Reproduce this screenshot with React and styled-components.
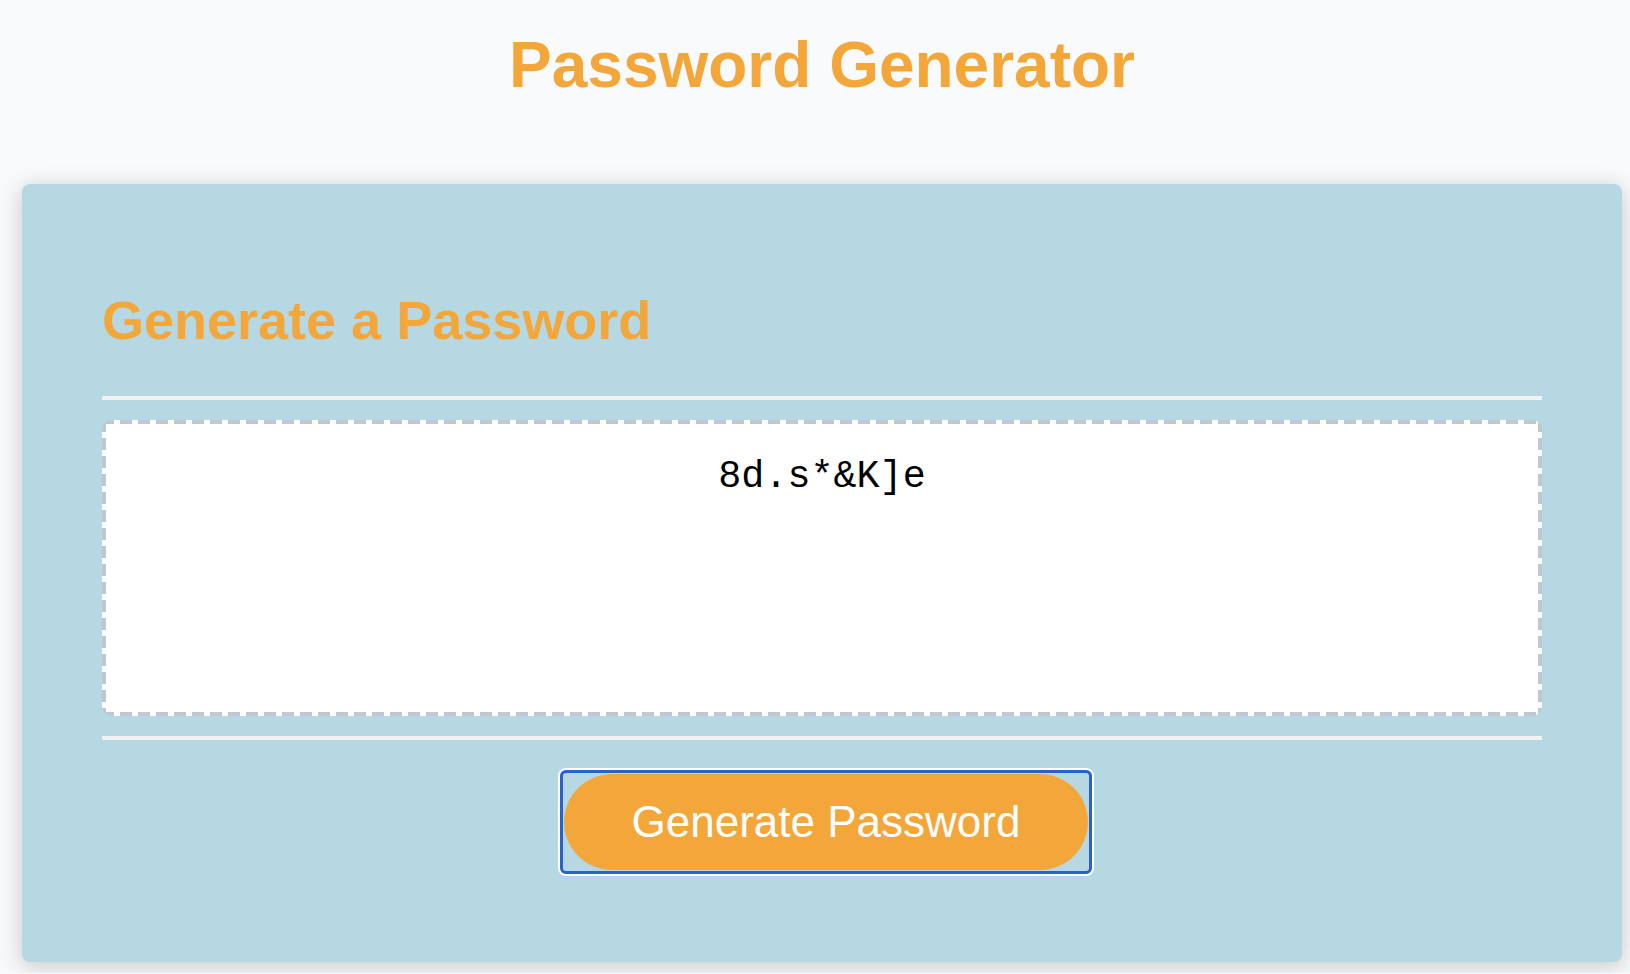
import styled, { createGlobalStyle } from 'styled-components';

const dashColor = '#c0c7cf';
const dashH = `repeating-linear-gradient(90deg, ${dashColor} 0 12px, transparent 12px 18px)`;
const dashV = `repeating-linear-gradient(180deg, ${dashColor} 0 12px, transparent 12px 18px)`;

const GlobalStyle = createGlobalStyle`
  html, body {
    margin: 0;
    padding: 0;
    background-color: #f9fafb;
    font-family: Helvetica, "Liberation Sans", Arial, sans-serif;
  }
`;

const Wrapper = styled.div`
  width: 1600px;
  padding: 0 8px 11px 22px;
`;

const Header = styled.header`
  text-align: center;
  padding: 28px 0 82px;
`;

const Title = styled.h1`
  margin: 0;
  font-size: 64px;
  font-weight: 700;
  color: #f3a73b;
`;

const Card = styled.div`
  background-color: #b6d8e3;
  border-radius: 8px;
  box-shadow: rgba(0, 0, 0, 0.18) 0 4px 22px 2px;
  padding: 60px 80px;
`;

const CardHeader = styled.div`
  &::after {
    content: ' ';
    display: block;
    width: 100%;
    height: 4px;
    background: #f2f2f2;
  }
`;

const CardTitle = styled.h2`
  margin: 45px 0;
  font-size: 54px;
  font-weight: 700;
  color: #f3a73b;
`;

// dashed border drawn with gradients so the dashes are as long as in the shot
const PasswordBox = styled.textarea`
  appearance: none;
  display: block;
  box-sizing: content-box;
  width: calc(100% - 68px);
  height: 86px;
  margin: 20px 0;
  padding: 32px 30px 170px;
  border: 4px solid transparent;
  border-radius: 10px;
  background:
    ${dashH} top left / 100% 4px no-repeat border-box,
    ${dashH} bottom left / 100% 4px no-repeat border-box,
    ${dashV} top left / 4px 100% no-repeat border-box,
    ${dashV} top right / 4px 100% no-repeat border-box,
    #ffffff;
  color: #000000;
  font-family: "Liberation Mono", "Courier New", monospace;
  font-size: 38.4px;
  line-height: 43px;
  text-align: center;
  resize: none;
  overflow: hidden;
  outline: none;
`;

const CardFooter = styled.div`
  text-align: center;

  &::before {
    content: ' ';
    display: block;
    width: 100%;
    height: 4px;
    background: #f2f2f2;
  }
`;

const Button = styled.button`
  position: relative;
  display: inline-block;
  margin: 34px 32px 32px 40px;
  padding: 26px 68px;
  border: none;
  border-radius: 50px;
  background-color: #f3a73b;
  color: #ffffff;
  font-family: Helvetica, "Liberation Sans", Arial, sans-serif;
  font-size: 44px;
  line-height: 44px;
  cursor: pointer;

  &::after {
    content: '';
    position: absolute;
    inset: -4px;
    border: 3px solid #2962c8;
    border-radius: 6px;
    box-shadow: 0 0 0 2px #ffffff;
    pointer-events: none;
  }
`;

export default function App() {
  return (
    <>
      <GlobalStyle />
      <Wrapper>
        <Header>
          <Title>Password Generator</Title>
        </Header>
        <Card>
          <CardHeader>
            <CardTitle>Generate a Password</CardTitle>
          </CardHeader>
          <PasswordBox readOnly value="8d.s*&K]e" />
          <CardFooter>
            <Button type="button">Generate Password</Button>
          </CardFooter>
        </Card>
      </Wrapper>
    </>
  );
}
